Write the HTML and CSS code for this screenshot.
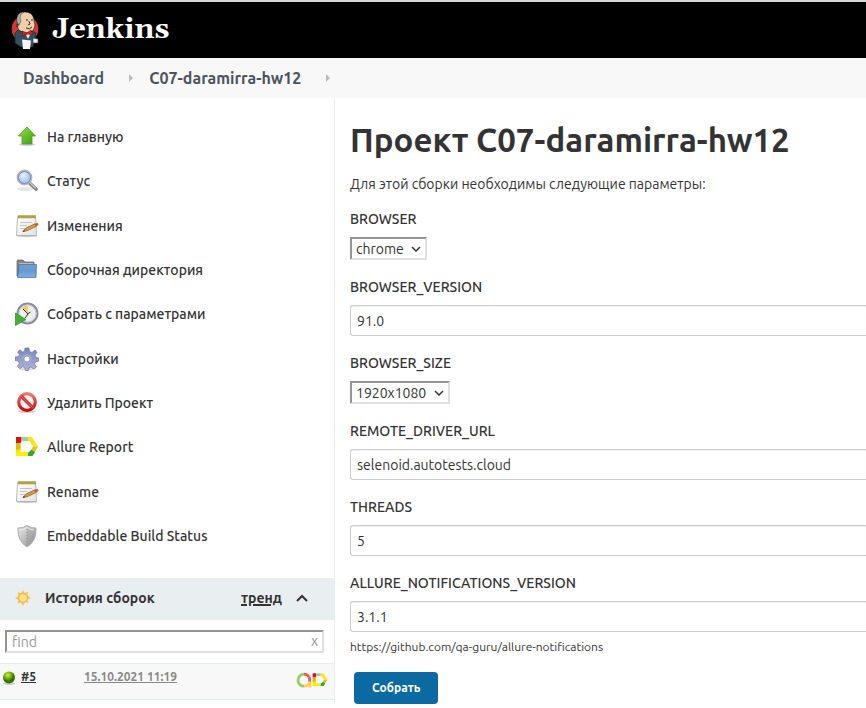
FILE: index.html
```html
<!DOCTYPE html>
<html lang="ru">
<head>
<meta charset="utf-8">
<title>C07-daramirra-hw12 [Jenkins]</title>
<link rel="stylesheet" href="styles.css">
</head>
<body>
<svg class="sprite" aria-hidden="true">
  <defs>
    <linearGradient id="green" x2="1" y2="1"><stop stop-color="#9be04c"/><stop offset="1" stop-color="#359b08"/></linearGradient>
    <linearGradient id="blue" x2="0" y2="1"><stop stop-color="#6d9fd4"/><stop offset=".5" stop-color="#659ad1"/><stop offset="1" stop-color="#81ade0"/></linearGradient>
    <linearGradient id="paper" x2="1" y2="1"><stop stop-color="#fff"/><stop offset="1" stop-color="#e4e4e4"/></linearGradient>
    <linearGradient id="gear" x2="0" y2="1"><stop stop-color="#7187b9"/><stop offset="1" stop-color="#b7b3da"/></linearGradient>
    <linearGradient id="red" x2="0" y2="1"><stop stop-color="#ef7777"/><stop offset="1" stop-color="#cb0909"/></linearGradient>
    <linearGradient id="steel" x2="1" y2="1"><stop stop-color="#eee"/><stop offset="1" stop-color="#8b8b8b"/></linearGradient>
    <radialGradient id="lens" cx=".4" cy=".35"><stop stop-color="#e6f1fd"/><stop offset="1" stop-color="#a6c8ef"/></radialGradient>
    <radialGradient id="ball" cx=".4" cy=".3"><stop stop-color="#cbee55"/><stop offset=".5" stop-color="#7dbd0c"/><stop offset="1" stop-color="#3d7000"/></radialGradient>
    <symbol id="notepad" viewBox="0 0 24 24">
      <ellipse cx="12" cy="22" rx="10.500" ry="1.200" fill="#ccc"/>
      <path d="M2.500 2.500h18l1 19h-20z" fill="url(#paper)" stroke="#a8a8a8" stroke-width=".8"/>
      <path d="M3 1.500h18v2.500H3z" fill="#c9bb58"/>
      <path d="M4 1v3.500M6 1v3.500M8 1v3.500M10 1v3.500M12 1v3.500M14 1v3.500M16 1v3.500M18 1v3.500M20 1v3.500" stroke="#91801f" stroke-width=".8"/>
      <path d="M5 8.500h12M5 11.500h7M5 14.500h5" stroke="#c4c4c4"/>
      <path d="M8 17.500l3-3.500 9-4.200 1.500 2.400-9 4.400z" fill="#d9a04a" stroke="#79501e" stroke-width=".7"/>
      <path d="M19.500 10l2.500-1.300q1.800.8 1.500 2.300l-2.700 1.500z" fill="#e0533a"/>
      <path d="M7.500 17.700l1.500-1.700 1 1.200z" fill="#333"/>
    </symbol>
    <symbol id="allure" viewBox="0 0 24 24">
      <path d="M1 8h4.500v13H1z" fill="#ffe000"/>
      <path d="M1 8h4.500v6.500H1z" fill="#dcbc0a"/>
      <path d="M1 17h13v4H1z" fill="#fe0"/>
      <path d="M1 2h5.500v4L5.500 8H1z" fill="#e00d1b"/>
      <path d="M6.500 2H13v4H6.500z" fill="#97cfa0"/>
      <path d="M13 2h4l6 9.500h-5L14.500 6H13z" fill="#ffe41a"/>
      <path d="M18 11.500h5l-3 5.500-3.500-2.500z" fill="#e5c510"/>
      <path d="M16.500 14.500L20 17l-2.500 4H13v-3z" fill="#36a43c"/>
    </symbol>
  </defs>
</svg>

<header class="header">
  <a class="brand" href="#">
    <svg class="mascot" viewBox="0 0 28 38" aria-hidden="true">
      <circle cx="14" cy="18" r="13.300" fill="#d33833"/>
      <path d="M6 9C6 3 10 1 14 1c6 0 9 4 9 9l1 4c-1 6-4 8-8 8-6 0-10-3-9-8z" fill="#edcfac" stroke="#1b1b1b" stroke-width=".6"/>
      <path d="M6 11C5 4 9 1 13 1c-2 1-4 3-4 6l1 3-2 4z" fill="#aeb1b1" stroke="#333" stroke-width=".5"/>
      <path d="M15 9h2M20 9h2M18 10l1 3-2 1M15 17q4 2 6-1M8 14q-3-2-2 2" fill="none" stroke="#332d29" stroke-width="1"/>
      <path d="M7 19L4 22 4 32l6 4h12l3-14-4-2-5 3z" fill="#34505e" stroke="#17242b" stroke-width=".7"/>
      <path d="M14 22l3 6 3-6z" fill="#e8e8e8"/>
      <path d="M11 20l5 2 4-3 2 5-5-1-5 2z" fill="#cb2520" stroke="#761310" stroke-width=".6"/>
      <path d="M22 27l5 1v4h-5z" fill="#eee" stroke="#34434a" stroke-width=".6"/>
      <path d="M11 28.500l9 1-1 8.500h-7z" fill="#f5f5f5"/>
    </svg>
    <span>Jenkins</span>
  </a>
</header>

<nav class="crumbs" aria-label="Путь">
  <a href="#">Dashboard</a><i class="sep"></i><a href="#">C07-daramirra-hw12</a><i class="sep"></i>
</nav>

<div class="page">
  <aside class="side">
    <ul class="tasks">
      <li><a href="#"><svg viewBox="0 0 24 24" aria-hidden="true"><ellipse cx="12" cy="19.500" rx="8" ry="1.500" fill="#ccc"/><path d="M12 2l8.500 9H17v8H7v-8H3.500z" fill="url(#green)" stroke="#4c9d2a" stroke-width=".8"/></svg>На главную</a></li>
      <li><a href="#"><svg viewBox="0 0 24 24" aria-hidden="true"><ellipse cx="10" cy="20" rx="8" ry="2" fill="#e5e5e5"/><path d="M15 14.500l6 5.500" stroke="#777" stroke-width="3.500" stroke-linecap="round"/><path d="M15 14l6 5.500" stroke="#ccc" stroke-width="1.500"/><circle cx="9.500" cy="8.500" r="7" fill="url(#lens)" stroke="#b5b5b5" stroke-width="1.800"/><circle cx="9.500" cy="8.500" r="6" fill="none" stroke="#6186bd" stroke-width=".9"/></svg>Статус</a></li>
      <li><a href="#"><svg aria-hidden="true"><use href="#notepad"/></svg>Изменения</a></li>
      <li><a href="#"><svg viewBox="0 0 24 24" aria-hidden="true"><path d="M2 18V3q0-1 1-1h5l2 2h9v14z" fill="#858585" stroke="#666" stroke-width=".7"/><path d="M4 5h14v5H4z" fill="#bbb"/><path d="M4 6.500h17.500L21 19.500H2.500z" fill="url(#blue)" stroke="#3d6ca5" stroke-width=".7"/></svg>Сборочная директория</a></li>
      <li><a href="#"><svg viewBox="0 0 24 24" aria-hidden="true"><circle cx="12.500" cy="11.500" r="10" fill="#eeeeea" stroke="#8889a5" stroke-width="2"/><circle cx="12.500" cy="11.500" r="8.500" fill="none" stroke="#c9c9cc"/><path d="M12.500 12L7 6q3-3 6-2z" fill="#e9cd61"/><path d="M8 7l5 5-3 4M12.500 12l3-2" stroke="#333" fill="none"/><path d="M.5 11l10.500 6.500-10.500 6z" fill="#45b12d" stroke="#31891e" stroke-width=".7"/></svg>Собрать с параметрами</a></li>
      <li><a href="#"><svg viewBox="0 0 24 24" aria-hidden="true"><ellipse cx="12" cy="22" rx="8" ry="1.500" fill="#ddd"/><path d="M10 1h4l.5 3.500 2.500 1 3-2.500 2 2.500L20 8l1 2.500 3 .5v3l-3.500 1-1 2 2 3-2.500 2-3-2-2 .7-.5 3h-3l-.8-3-2-1-3 2-2.400-2.500 2-2.700-1-2.500L0 13.500V10l3.500-.5 1-2L2.500 5 5 2.800 7.500 5l2-.8z" fill="url(#gear)" stroke="#7375a2" stroke-width=".7"/><circle cx="12" cy="12" r="4.800" fill="#a4acd3"/><circle cx="12" cy="12" r="3" fill="#fff" stroke="#777da8" stroke-width=".7"/></svg>Настройки</a></li>
      <li><a href="#"><svg viewBox="0 0 24 24" aria-hidden="true"><ellipse cx="12" cy="20.500" rx="9" ry="1.500" fill="#ccc"/><circle cx="12" cy="11" r="8.300" fill="#f2f2f2" stroke="url(#red)" stroke-width="3.200"/><path d="M6 5l12 12" stroke="#d63030" stroke-width="3.200"/><path d="M6 5l11.500 11.500" stroke="#e66767" stroke-width="1"/></svg>Удалить Проект</a></li>
      <li><a href="#"><svg aria-hidden="true"><use href="#allure"/></svg>Allure Report</a></li>
      <li><a href="#"><svg aria-hidden="true"><use href="#notepad"/></svg>Rename</a></li>
      <li><a href="#"><svg viewBox="0 0 24 24" aria-hidden="true"><path d="M12 1.500q4 3 9 2.500.8 13-9 19Q2.200 17 3 4q5 .5 9-2.500z" fill="url(#steel)" stroke="#aaa"/><path d="M12 2v20q8-6 8-17-5 0-8-3z" fill="#999" opacity=".35"/><path d="M5 6q4 0 7-2.500Q15 6 19 6" fill="none" stroke="#eee"/><path d="M12 5v15" stroke="#888" stroke-dasharray="1 2"/></svg>Embeddable Build Status</a></li>
    </ul>

    <section class="history">
      <div class="history-head">
        <svg class="sun" viewBox="0 0 16 16" aria-hidden="true"><path d="M8 0l1.400 3L13 1.800 12.600 5 16 8l-3.400 1.500L13.500 13l-3.600-.6L8 16l-1.800-3.600L2.500 13.500l.8-3.800L0 8l3.400-2L2.500 2.400 6.300 3z" fill="#fac15a"/><circle cx="8" cy="8" r="4.200" fill="#ffe884" stroke="#f5a437" stroke-width=".7"/></svg>
        <h2>История сборок</h2>
        <a href="#">тренд</a>
        <button class="fold" aria-label="Свернуть"><svg viewBox="0 0 12 8" aria-hidden="true"><path d="M1 7l5-5 5 5" fill="none" stroke="#333" stroke-width="2"/></svg></button>
      </div>
      <div class="find">
        <input type="text" placeholder="find" aria-label="find">
        <button aria-label="Очистить">x</button>
      </div>
      <div class="build">
        <svg class="ball" viewBox="0 0 14 14" aria-hidden="true"><ellipse cx="7" cy="12.500" rx="6" ry="1.500" fill="#ccc"/><circle cx="7" cy="6.500" r="6" fill="url(#ball)"/></svg>
        <a class="num" href="#">#5</a>
        <a class="date" href="#">15.10.2021 11:19</a>
        <a class="badges" href="#" aria-label="Allure"><svg viewBox="0 0 32 16" aria-hidden="true">
          <g fill="none" stroke-width="2.800"><path d="M8 14.200A6 6 0 0 1 8 2.200" stroke="#97cc64"/><path d="M8 2.200A6 6 0 0 1 13 5" stroke="#fd5a3e"/><path d="M13 5a6 6 0 0 1 .5 5" stroke="#c65aa5"/><path d="M8 14.200q3 0 5-2.500M14 9.500v6" stroke="#ffd050"/></g>
          <use href="#allure" x="16" y="0" width="16" height="16"/></svg></a>
      </div>
    </section>
  </aside>

  <main class="main">
    <h1>Проект C07-daramirra-hw12</h1>
    <p class="intro">Для этой сборки необходимы следующие параметры:</p>
    <form>
      <div class="field"><label for="browser">BROWSER</label><div class="pick"><select id="browser"><option>chrome</option></select><svg viewBox="0 0 10 6" aria-hidden="true"><path d="M1 1l4 4 4-4"/></svg></div></div>
      <div class="field"><label for="version">BROWSER_VERSION</label><input id="version" type="text" value="91.0"></div>
      <div class="field"><label for="size">BROWSER_SIZE</label><div class="pick"><select id="size"><option>1920x1080</option></select><svg viewBox="0 0 10 6" aria-hidden="true"><path d="M1 1l4 4 4-4"/></svg></div></div>
      <div class="field"><label for="url">REMOTE_DRIVER_URL</label><input id="url" type="text" value="selenoid.autotests.cloud"></div>
      <div class="field"><label for="threads">THREADS</label><input id="threads" type="text" value="5"></div>
      <div class="field"><label for="allure-version">ALLURE_NOTIFICATIONS_VERSION</label><input id="allure-version" type="text" value="3.1.1"></div>
      <p class="hint">https://github.com/qa-guru/allure-notifications</p>
      <button class="submit" type="submit">Собрать</button>
    </form>
  </main>
</div>
</body>
</html>
```
FILE: styles.css
```css
* { box-sizing: border-box; }
body {
  margin: 0;
  background: #fff;
  color: #333;
  font: 14px/20px Ubuntu, "Noto Sans", sans-serif;
}
a { color: inherit; text-decoration: none; }
svg { display: block; flex: none; }
button, input, select { font: inherit; color: inherit; }
.sprite { position: absolute; width: 0; height: 0; }

.header {
  height: 58px;
  border-top: 2px solid #d5d8d8;
  background: #000;
  display: flex;
  align-items: center;
  padding: 0 11px;
}
.brand {
  display: flex;
  align-items: center;
  gap: 13px;
  color: #fff;
  font: bold 29px/38px Gelasio, Georgia, "DejaVu Serif", serif;
}
.mascot { width: 28px; height: 38px; }

.crumbs {
  height: 40px;
  padding: 0 23px;
  background: #f8f8f8;
  display: flex;
  align-items: center;
  color: #4d545d;
  font-size: 16px;
  font-weight: 700;
}
.sep {
  margin: 0 16px 0 25px;
  border: 4px solid transparent;
  border-left-color: #bbb;
  border-right: 0;
}

.page { display: flex; }
.side {
  flex: 0 0 335px;
  border-right: 1px solid #e9eef0;
  padding-top: 17px;
}
.tasks {
  display: grid;
  grid-auto-rows: 1fr;
  min-height: 443px;
  margin: 0 0 20px;
  padding: 0 15px;
  list-style: none;
}
.tasks a {
  height: 100%;
  display: flex;
  align-items: center;
  gap: 8px;
  font-weight: 500;
}
.tasks svg { width: 24px; height: 24px; }

.history-head {
  height: 42px;
  padding: 0 26px 2px 15px;
  display: flex;
  align-items: center;
  background: #e9eef1;
  font-weight: 700;
}
.history-head h2 { margin: 0 auto 0 14px; font-size: 14px; line-height: 20px; }
.history-head a { text-decoration: underline; text-decoration-thickness: 2px; }
.sun { width: 16px; height: 16px; }
.fold { margin-left: 14px; padding: 0; border: 0; background: none; }
.fold svg { width: 12px; height: 8px; }
.find { display: flex; position: relative; padding: 10px 10px 10px 5px; }
.find input {
  width: 100%;
  height: 23px;
  padding: 0 5px;
  border: 2px solid;
  border-color: #949494 #e0e0e0 #e0e0e0 #949494;
}
.find input::placeholder { color: #999; opacity: 1; }
.find button {
  position: absolute;
  right: 12px;
  top: 12px;
  padding: 0 4px;
  border: 0;
  background: none;
  color: #999;
  line-height: 18px;
}
.build {
  height: 37px;
  padding: 3px 6px 0 2px;
  display: flex;
  align-items: flex-start;
  background: #f8f8f8;
  border: solid #e9eef0;
  border-width: 1px 0;
  font-size: 12px;
  font-weight: 700;
}
.build > svg { width: 14px; height: 14px; margin: 4px 5px 0 0; }
.num, .date { text-decoration: underline; }
.num { width: 63px; }
.date { color: #888; }
.badges { margin: 5px 0 0 auto; }
.badges svg { width: 32px; height: 16px; }

.main { flex: 1; min-width: 0; padding: 22px 0 0 15px; }
h1 { margin: 0 0 14px; font-size: 33px; line-height: 40px; font-weight: 700; }
.intro { margin: 0 0 15px; }
.field { margin-bottom: 17px; }
.field label {
  display: block;
  margin-bottom: 8px;
  font-weight: 500;
}
.field > input {
  display: block;
  width: 100%;
  height: 31px;
  padding: 0 6px;
  border: 1px solid #ccc;
  border-right: 0;
  border-radius: 3px 0 0 3px;
  box-shadow: inset 0 1px 1px #0001;
}
.pick { position: relative; width: max-content; }
.pick select {
  display: block;
  appearance: none;
  height: 23px;
  padding: 0 21px 0 4px;
  border: 2px solid;
  border-color: #949494 #e0e0e0 #e0e0e0 #949494;
  border-radius: 0;
  background: #fff;
}
.pick svg { position: absolute; right: 6px; top: 9px; width: 10px; height: 6px; fill: none; stroke: #333; stroke-width: 1.5; pointer-events: none; }
.hint { margin: -12px 0 15px; font-size: 12px; line-height: 20px; }
.submit {
  height: 32px;
  margin-left: 4px;
  padding: 0 18px;
  border: 0;
  border-radius: 4px;
  background: #0b6aa2;
  color: #fff;
  font-size: 12px;
  font-weight: 700;
}
```
